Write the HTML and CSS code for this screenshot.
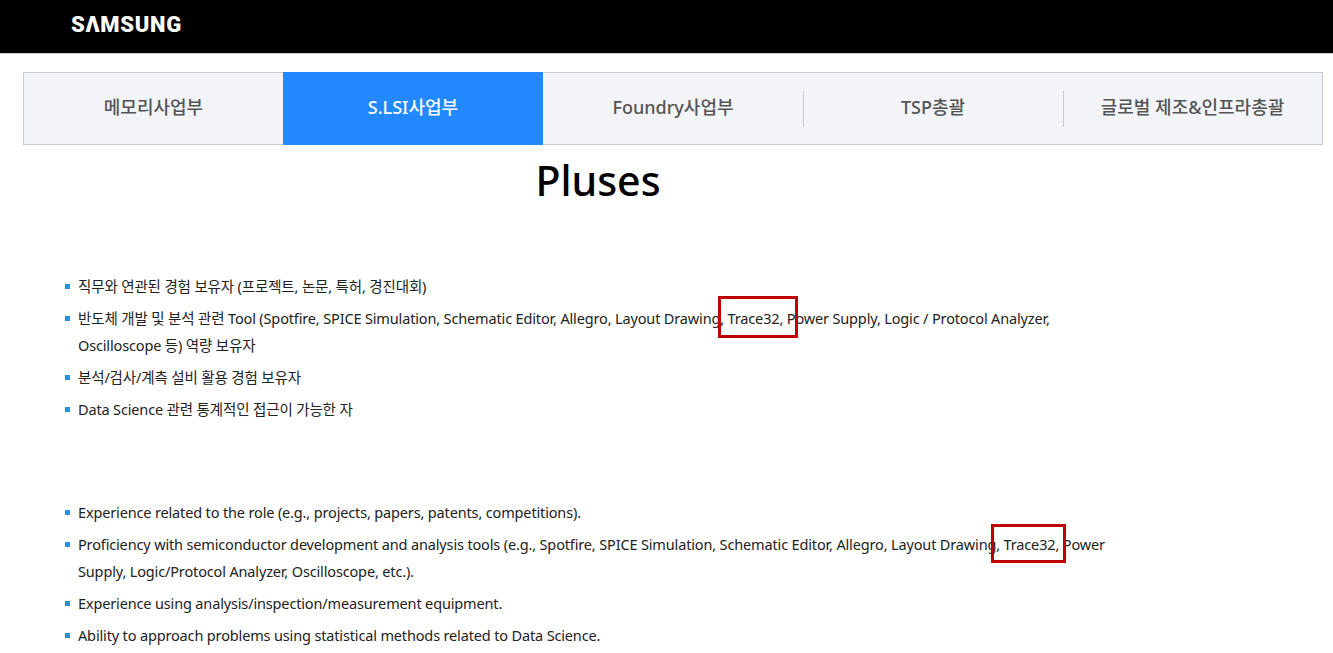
FILE: index.html
```html
<!DOCTYPE html>
<html lang="ko">
<head>
    <meta charset="UTF-8">
    <meta name="viewport" content="width=device-width, initial-scale=1.0">
    <title>Pluses</title>
    <link rel="stylesheet" href="styles.css">
</head>
<body>
    <header class="top-bar">
        <span class="logo">SΛMSUNG</span>
    </header>

    <nav class="tabs">
        <a class="tab">메모리사업부</a>
        <a class="tab active">S.LSI사업부</a>
        <a class="tab">Foundry사업부</a>
        <a class="tab divided">TSP총괄</a>
        <a class="tab divided">글로벌 제조&amp;인프라총괄</a>
    </nav>

    <main class="content">
        <h1>Pluses</h1>

        <section class="plus-block block-ko">
            <ul>
                <li>직무와 연관된 경험 보유자 (프로젝트, 논문, 특허, 경진대회)</li>
                <li>반도체 개발 및 분석 관련 Tool (Spotfire, SPICE Simulation, Schematic Editor, Allegro, Layout Drawing, Trace32, Power Supply, Logic / Protocol Analyzer, Oscilloscope 등) 역량 보유자</li>
                <li>분석/검사/계측 설비 활용 경험 보유자</li>
                <li>Data Science 관련 통계적인 접근이 가능한 자</li>
            </ul>
            <div class="mark mark-ko"></div>
        </section>

        <section class="plus-block block-en">
            <ul>
                <li>Experience related to the role (e.g., projects, papers, patents, competitions).</li>
                <li>Proficiency with semiconductor development and analysis tools (e.g., Spotfire, SPICE Simulation, Schematic Editor, Allegro, Layout Drawing, Trace32, Power Supply, Logic/Protocol Analyzer, Oscilloscope, etc.).</li>
                <li>Experience using analysis/inspection/measurement equipment.</li>
                <li>Ability to approach problems using statistical methods related to Data Science.</li>
            </ul>
            <div class="mark mark-en"></div>
        </section>
    </main>
</body>
</html>
```

FILE: styles.css
```css
html, body { margin: 0; padding: 0; }
body { font-family: "Noto Sans", "Noto Sans CJK KR", sans-serif; background: #fff; color: #222; overflow: hidden; }

.top-bar { height: 49px; background: #000; border-bottom: 1px solid #ccc; padding: 0 0 4px 71px; display: flex; align-items: center; }
.logo { font-family: Roboto, sans-serif; font-weight: 900; font-size: 22px; letter-spacing: 0.7px; color: #fff; line-height: 1; }

.tabs { display: flex; margin: 18px 10px 0 23px; height: 73px; box-sizing: border-box; border: 1px solid #c8cbd0; background: #f2f4f8; }
.tab { position: relative; width: 260px; padding-bottom: 5px; display: flex; align-items: center; justify-content: center; font-size: 18px; font-weight: 500; color: #555; }
.tab:first-child, .tab:last-child { width: 259px; }
.tab.active { background: #2288ff; color: #fff; margin: -1px 0; }
.tab.divided::before { content: ""; position: absolute; left: 0; top: 18px; height: 36px; width: 1px; background: #c8cbd0; }

.content { width: 1150px; margin-left: 23px; }
h1 { margin: 10px 0 0; font-size: 41px; font-weight: 500; line-height: 50px; text-align: center; color: #000; }

.plus-block { position: relative; }
.block-ko { margin-top: 68px; }
.block-en { margin-top: 76px; }

ul { list-style: none; margin: 0; padding: 0 50px 0 55px; }
li { position: relative; font-size: 14.5px; letter-spacing: -0.15px; line-height: 27px; margin-bottom: 5px; color: #222; }
li::before { content: ""; position: absolute; left: -13px; top: 11px; width: 5px; height: 5px; background: #2b8fd9; }

.mark { position: absolute; border: 3px solid #c00000; box-sizing: border-box; }
.mark-ko { left: 695px; top: 23px; width: 80px; height: 42px; }
.mark-en { left: 968px; top: 25px; width: 75px; height: 39px; }
```
